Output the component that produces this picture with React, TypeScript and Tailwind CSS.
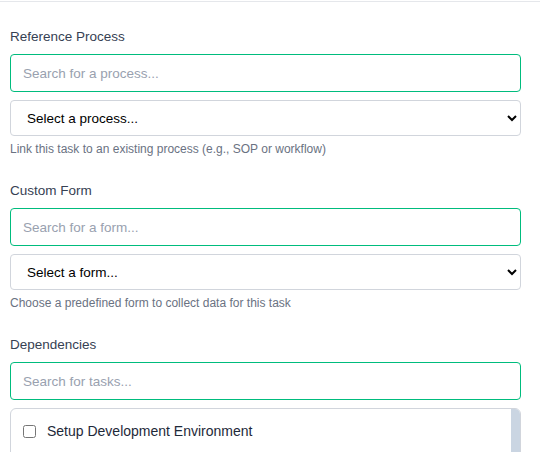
import React from 'react';

function Field({
  label,
  searchPlaceholder,
  selectPlaceholder,
  help,
}: {
  label: string;
  searchPlaceholder: string;
  selectPlaceholder: string;
  help: string;
}) {
  return (
    <div>
      <label className="block text-[13.5px] leading-5 text-gray-700 mb-[7px]">{label}</label>
      <input
        type="text"
        placeholder={searchPlaceholder}
        className="block w-full h-[38px] px-3 rounded border border-emerald-500 text-[13.5px] text-gray-900 placeholder:text-gray-400 outline-none"
      />
      <select className="block w-full h-[36px] mt-2 pl-3 pr-1 rounded border border-gray-300 bg-white text-[13.5px] text-black">
        <option>{selectPlaceholder}</option>
      </select>
      <p className="mt-[5px] text-xs leading-4 text-gray-500">{help}</p>
    </div>
  );
}

export default function App() {
  return (
    <div className="h-[452px] overflow-hidden bg-white pt-px font-['Liberation_Sans',Arial,sans-serif]">
      <div className="border-t border-gray-200 pt-[25px] pl-[10px] pr-[19px]">
        <Field
          label="Reference Process"
          searchPlaceholder="Search for a process..."
          selectPlaceholder="Select a process..."
          help="Link this task to an existing process (e.g., SOP or workflow)"
        />

        <div className="mt-[24px]">
          <Field
            label="Custom Form"
            searchPlaceholder="Search for a form..."
            selectPlaceholder="Select a form..."
            help="Choose a predefined form to collect data for this task"
          />
        </div>

        {/* Dependencies */}
        <div className="mt-[24px]">
          <label className="block text-[13.5px] leading-5 text-gray-700 mb-[7px]">Dependencies</label>
          <input
            type="text"
            placeholder="Search for tasks..."
            className="block w-full h-[38px] px-3 rounded border border-emerald-500 text-[13.5px] text-gray-900 placeholder:text-gray-400 outline-none"
          />
          <div className="mt-2 h-[160px] flex overflow-hidden rounded-md border border-gray-300">
            <div className="flex-1">
              <label className="flex items-center gap-[11px] p-3">
                <input type="checkbox" className="w-[13px] h-[13px]" />
                <span className="text-sm leading-5 text-gray-800">Setup Development Environment</span>
              </label>
            </div>
            {/* scrollbar */}
            <div className="w-[9px]">
              <div className="h-[120px] bg-slate-300" />
            </div>
          </div>
        </div>
      </div>
    </div>
  );
}
